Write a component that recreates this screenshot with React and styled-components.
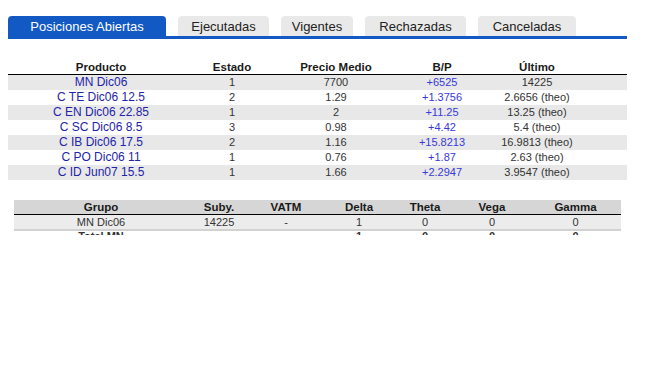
import React from 'react'
import styled, { createGlobalStyle } from 'styled-components'

const GlobalStyle = createGlobalStyle`
  html, body {
    margin: 0;
    padding: 0;
    background: #fff;
    font-family: "Liberation Sans", Arial, sans-serif;
  }
`

const Page = styled.div`
  width: 648px;
  height: 384px;
  padding: 16px 0 0 8px;
  box-sizing: border-box;
  overflow: hidden;
`

const TabBar = styled.div`
  display: flex;
  gap: 12px;
  width: 619px;
  border-bottom: 3px solid #1259c3;
`

const Tab = styled.div`
  width: ${p => p.w}px;
  height: 20px;
  line-height: 21px;
  text-align: center;
  font-size: 13px;
  border-radius: 4px 4px 0 0;
  background: ${p => (p.active ? '#1259c3' : '#e9e9e9')};
  color: ${p => (p.active ? '#fff' : '#222')};
`

const Grid = styled.div`
  display: grid;
  grid-template-columns: ${p => p.cols};
  width: ${p => p.width}px;
  font-size: 11px;
  text-align: center;
`

const PosTable = styled(Grid)`
  margin-top: 21px;
`

const HeadCell = styled.div`
  height: 14px;
  line-height: 14px;
  font-weight: bold;
  font-size: 11.5px;
  color: #1a1a1a;
  border-bottom: 1px solid #000;
`

const Cell = styled.div`
  height: 15px;
  line-height: 15px;
  font-size: ${p => (p.big ? '12px' : '11px')};
  color: ${p => p.color || '#333'};
  background: ${p => (p.shade ? '#e8e8e8' : '#fff')};
`

const GreekWrap = styled.div`
  margin: 20px 0 0 6px;
  height: 35px;
  overflow: hidden;
`

const GreekHead = styled.div`
  height: 14px;
  line-height: 15px;
  font-weight: bold;
  font-size: 11.5px;
  color: #1a1a1a;
  background: #d6d6d6;
  border-bottom: 1px solid #000;
`

const GreekCell = styled.div`
  height: 14px;
  line-height: 14px;
  color: #333;
  background: #ececec;
  border-bottom: 2px solid #d2d2d2;
`

const TotalCell = styled(GreekCell)`
  line-height: 10px;
  font-weight: bold;
  background: #fff;
  border-bottom: none;
`

const tabs = [
  ['Posiciones Abiertas', 158],
  ['Ejecutadas', 91],
  ['Vigentes', 72],
  ['Rechazadas', 101],
  ['Canceladas', 98],
]

const positions = [
  ['MN Dic06', '1', '7700', '+6525', '14225'],
  ['C TE Dic06 12.5', '2', '1.29', '+1.3756', '2.6656 (theo)'],
  ['C EN Dic06 22.85', '1', '2', '+11.25', '13.25 (theo)'],
  ['C SC Dic06 8.5', '3', '0.98', '+4.42', '5.4 (theo)'],
  ['C IB Dic06 17.5', '2', '1.16', '+15.8213', '16.9813 (theo)'],
  ['C PO Dic06 11', '1', '0.76', '+1.87', '2.63 (theo)'],
  ['C ID Jun07 15.5', '1', '1.66', '+2.2947', '3.9547 (theo)'],
]

const greekCols = ['Grupo', 'Suby.', 'VATM', 'Delta', 'Theta', 'Vega', 'Gamma']
const greekRows = [['MN Dic06', '14225', '-', '1', '0', '0', '0']]
const totalRow = ['Total MN', '', '', '1', '0', '0', '0']

export default function App() {
  return (
    <Page>
      <GlobalStyle />
      <TabBar>
        {tabs.map(([t, w], i) => (
          <Tab key={t} w={w} active={i === 0}>{t}</Tab>
        ))}
      </TabBar>

      <PosTable width={619} cols="186px 76px 132px 80px 110px 1fr">
        {['Producto', 'Estado', 'Precio Medio', 'B/P', 'Último', ''].map((h, i) => (
          <HeadCell key={i}>{h}</HeadCell>
        ))}
        {positions.map((row, r) =>
          [...row, ''].map((v, c) => (
            <Cell
              key={r + '-' + c}
              shade={r % 2 === 0}
              big={c === 0}
              color={c === 0 ? '#2424a8' : c === 3 ? '#3838dc' : undefined}
            >
              {v}
            </Cell>
          ))
        )}
      </PosTable>

      <GreekWrap>
        <Grid width={607} cols="174px 62px 72px 74px 58px 76px 1fr">
          {greekCols.map(h => <GreekHead key={h}>{h}</GreekHead>)}
          {greekRows.map((row, r) =>
            row.map((v, c) => <GreekCell key={r + '-' + c}>{v}</GreekCell>)
          )}
          {totalRow.map((v, c) => <TotalCell key={'t' + c}>{v}</TotalCell>)}
        </Grid>
      </GreekWrap>
    </Page>
  )
}
